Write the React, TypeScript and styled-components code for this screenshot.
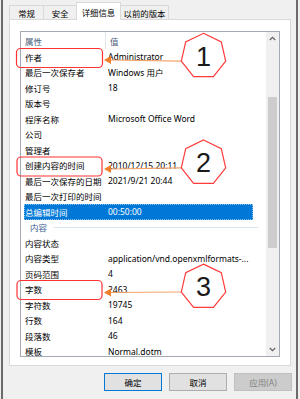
import React from "react";
import styled, { createGlobalStyle } from "styled-components";

const GlobalStyle = createGlobalStyle`
  html, body {
    margin: 0;
    padding: 0;
    background: #f0f0f0;
  }
  body {
    font-family: "Noto Sans", "Noto Sans CJK SC", sans-serif;
  }
`;

const Frame = styled.div`
  position: relative;
  width: 300px;
  height: 399px;
  padding: 0 2px 0 1px;
  box-sizing: border-box;
  background: #f0f0f0;
  overflow: hidden;
`;

const Window = styled.div`
  height: 100%;
  box-sizing: border-box;
  border-left: 2px solid #6b6b6b;
  border-right: 2px solid #6b6b6b;
  display: flex;
  flex-direction: column;
`;

const TabStrip = styled.div`
  position: relative;
  z-index: 1;
  display: flex;
  align-items: flex-end;
  height: 19px;
  padding-left: 7px;
`;

const Tab = styled.div<{ $active?: boolean; $w: number }>`
  width: ${(p) => p.$w}px;
  height: ${(p) => (p.$active ? 18 : 14)}px;
  margin-bottom: ${(p) => (p.$active ? -1 : 0)}px;
  margin-left: -1px;
  box-sizing: border-box;
  border: 1px solid #d9d9d9;
  border-bottom: none;
  background: ${(p) => (p.$active ? "#fff" : "#f0f0f0")};
  display: flex;
  align-items: center;
  justify-content: center;
  font-size: 8.4px;
  color: #000;
  white-space: nowrap;
`;

const Panel = styled.div`
  margin: 0 5px 0 6px;
  height: 347px;
  box-sizing: border-box;
  border: 1px solid #d9d9d9;
  background: #fff;
  padding: 11px 10px 8px 10px;
`;

const List = styled.div`
  height: 326px;
  box-sizing: border-box;
  border: 1px solid #a3aab3;
  display: flex;
  overflow: hidden;
`;

const ListMain = styled.div`
  flex: 1;
  overflow: hidden;
  font-size: 8.5px;
`;

const Header = styled.div`
  display: flex;
  height: 17px;
  color: #4c607a;
`;

const HeadCell = styled.div<{ $w?: number }>`
  ${(p) => (p.$w ? `width: ${p.$w}px; border-right: 1px solid #e5e5e5;` : "flex: 1;")}
  display: flex;
  align-items: center;
  padding-left: 4px;
`;

const Row = styled.div<{ $selected?: boolean }>`
  display: flex;
  align-items: center;
  margin-left: 3px;
  width: 229px;
  height: 15.5px;
  box-sizing: border-box;
  white-space: nowrap;
  color: ${(p) => (p.$selected ? "#fff" : "#000")};
  background: ${(p) => (p.$selected ? "#0078d7" : "transparent")};
  outline: ${(p) => (p.$selected ? "1px dotted #8fbfe8" : "none")};
  outline-offset: -1px;
`;

const NameCell = styled.div`
  width: 78px;
  padding-left: 1px;
  overflow: hidden;
`;

const ValueCell = styled.div`
  flex: 1;
  padding-left: 5px;
  overflow: hidden;
`;

const GroupRow = styled.div`
  display: flex;
  align-items: center;
  margin-left: 3px;
  width: 234px;
  height: 15.5px;
  color: #3d5b8f;
`;

const GroupLabel = styled.span`
  padding-left: 6px;
`;

const GroupLine = styled.div`
  flex: 1;
  height: 1px;
  margin-left: 7px;
  background: #dbe3ef;
`;

const ScrollBar = styled.div`
  width: 13px;
  background: #f0f0f0;
  display: flex;
  flex-direction: column;
`;

const ScrollBtn = styled.div`
  height: 13px;
  display: flex;
  align-items: center;
  justify-content: center;
`;

const Track = styled.div`
  flex: 1;
  padding: 52px 2px 0 2px;
`;

const Thumb = styled.div`
  height: 151px;
  background: #cdcdcd;
`;

const ButtonRow = styled.div`
  display: flex;
  justify-content: flex-end;
  gap: 7px;
  margin-top: 7px;
  padding-right: 4px;
`;

const Button = styled.div<{ $default?: boolean; $disabled?: boolean }>`
  width: 58px;
  height: 18px;
  box-sizing: border-box;
  display: flex;
  align-items: center;
  justify-content: center;
  font-size: 8.5px;
  border: 1px solid
    ${(p) => (p.$default ? "#0078d7" : p.$disabled ? "#bfbfbf" : "#adadad")};
  background: ${(p) => (p.$disabled ? "#cccccc" : "#e1e1e1")};
  color: ${(p) => (p.$disabled ? "#838383" : "#000")};
`;

const Overlay = styled.svg`
  position: absolute;
  left: 0;
  top: 0;
  pointer-events: none;
`;

type Item =
  | { name: string; value?: string; selected?: boolean }
  | { group: string };

const items: Item[] = [
  { name: "作者", value: "Administrator" },
  { name: "最后一次保存者", value: "Windows 用户" },
  { name: "修订号", value: "18" },
  { name: "版本号" },
  { name: "程序名称", value: "Microsoft Office Word" },
  { name: "公司" },
  { name: "管理者" },
  { name: "创建内容的时间", value: "2010/12/15 20:11" },
  { name: "最后一次保存的日期", value: "2021/9/21 20:44" },
  { name: "最后一次打印的时间" },
  { name: "总编辑时间", value: "00:50:00", selected: true },
  { group: "内容" },
  { name: "内容状态" },
  { name: "内容类型", value: "application/vnd.openxmlformats-..." },
  { name: "页码范围", value: "4" },
  { name: "字数", value: "2463" },
  { name: "字符数", value: "19745" },
  { name: "行数", value: "164" },
  { name: "段落数", value: "46" },
  { name: "模板", value: "Normal.dotm" },
];

// annotation callouts: red box on the label, arrow, numbered heptagon
const callouts = [
  { n: "1", box: [16.5, 48.5, 86, 19], ay: 60, cy: 56.1 },
  { n: "2", box: [17, 157, 85, 19], ay: 169, cy: 162.8 },
  { n: "3", box: [17, 280.5, 85, 19], ay: 292.5, cy: 286.9 },
];

const heptagon = (cx: number, cy: number, r: number) =>
  Array.from({ length: 7 }, (_, k) => {
    const a = -Math.PI / 2 + (k * 2 * Math.PI) / 7;
    return `${(cx + r * Math.cos(a)).toFixed(1)},${(cy + r * Math.sin(a)).toFixed(1)}`;
  }).join(" ");

const Chevron = ({ up }: { up?: boolean }) => (
  <svg width="7" height="5" viewBox="0 0 7 5">
    <polyline
      points={up ? "0.8,4 3.5,1.3 6.2,4" : "0.8,1 3.5,3.7 6.2,1"}
      fill="none"
      stroke="#606060"
      strokeWidth="1.2"
    />
  </svg>
);

export default function App() {
  const cx = 203.5;
  const r = 22.8;
  return (
    <Frame>
      <GlobalStyle />
      <Window>
        <TabStrip>
          <Tab $w={35}>常规</Tab>
          <Tab $w={34}>安全</Tab>
          <Tab $w={45} $active>
            详细信息
          </Tab>
          <Tab $w={49}>以前的版本</Tab>
        </TabStrip>
        <Panel>
          <List>
            <ListMain>
              <Header>
                <HeadCell $w={80}>属性</HeadCell>
                <HeadCell>值</HeadCell>
              </Header>
              {items.map((it, i) =>
                "group" in it ? (
                  <GroupRow key={i}>
                    <GroupLabel>{it.group}</GroupLabel>
                    <GroupLine />
                  </GroupRow>
                ) : (
                  <Row key={i} $selected={it.selected}>
                    <NameCell>{it.name}</NameCell>
                    <ValueCell>{it.value ?? ""}</ValueCell>
                  </Row>
                )
              )}
            </ListMain>
            <ScrollBar>
              <ScrollBtn>
                <Chevron up />
              </ScrollBtn>
              <Track>
                <Thumb />
              </Track>
              <ScrollBtn>
                <Chevron />
              </ScrollBtn>
            </ScrollBar>
          </List>
        </Panel>
        <ButtonRow>
          <Button $default>确定</Button>
          <Button>取消</Button>
          <Button $disabled>应用(A)</Button>
        </ButtonRow>
      </Window>
      <Overlay width="300" height="399" viewBox="0 0 300 399">
        {callouts.map((c) => {
          const [bx, by, bw, bh] = c.box;
          const vx = cx - r * Math.cos(Math.PI / 14);
          const vy = c.cy + r * Math.sin(Math.PI / 14);
          return (
            <g key={c.n}>
              <rect x={bx} y={by} width={bw} height={bh} rx="4" fill="none" stroke="#ff3333" strokeWidth="1.2" />
              <line x1={vx} y1={vy} x2={110} y2={c.ay} stroke="#f4a26a" strokeWidth="1.1" />
              <polygon
                points={`104,${c.ay} 111,${c.ay - 4} 111,${c.ay + 4}`}
                fill="#f07f2c"
              />
              <polygon points={heptagon(cx, c.cy, r)} fill="#fff" stroke="#ff3b3b" strokeWidth="1.2" />
              <text
                x={cx}
                y={c.cy + 9.5}
                textAnchor="middle"
                fontFamily="Liberation Sans, Arial, sans-serif"
                fontSize="27"
                fill="#1a1a1a"
              >
                {c.n}
              </text>
            </g>
          );
        })}
      </Overlay>
    </Frame>
  );
}
